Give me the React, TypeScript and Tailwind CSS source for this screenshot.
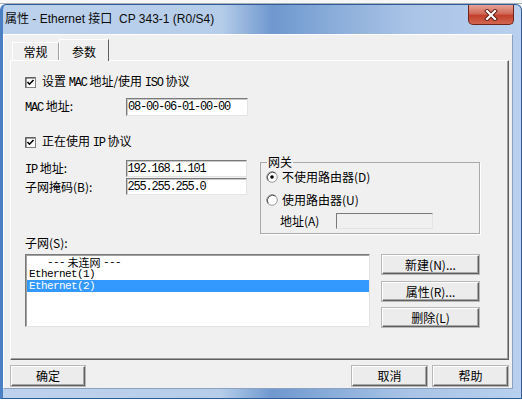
import React from "react";

const mono = "font-['Liberation_Mono',monospace] text-[12px] tracking-[-1.2px]";
const listMono = "font-['Liberation_Mono',monospace] text-[11px] tracking-[-0.6px] leading-[12px]";

function CheckBox() {
  return (
    <svg width="11" height="11" viewBox="0 0 11 11" className="shrink-0">
      <rect x="0.5" y="0.5" width="10" height="10" fill="#fff" stroke="#808080" />
      <path d="M1 1 H10" stroke="#404040" />
      <path d="M1 1 V10" stroke="#404040" />
      <path d="M2.5 5 L4.5 7.2 L8.5 3" stroke="#000" strokeWidth="1.6" fill="none" />
    </svg>
  );
}

function Radio({ checked }: { checked?: boolean }) {
  return (
    <svg width="12" height="12" viewBox="0 0 12 12" className="shrink-0">
      <circle cx="6" cy="6" r="5.3" fill="#fff" stroke="#9a9a9a" />
      <path d="M2.2 9.4 A5.3 5.3 0 0 1 9.6 2.1" stroke="#505050" fill="none" />
      {checked && <circle cx="6" cy="6" r="1.8" fill="#000" />}
    </svg>
  );
}

function Field({ value, className }: { value?: string; className: string }) {
  return (
    <div
      className={`${className} bg-white border border-t-[#7a7a7a] border-l-[#7a7a7a] border-r-[#e4e4e4] border-b-[#e4e4e4] shadow-[inset_1px_1px_0_#c8c8c8] flex items-center pl-[1px] leading-[14px] ${mono}`}
    >
      {value}
    </div>
  );
}

function Btn({ label, className }: { label: string; className: string }) {
  return (
    <div
      className={`${className} bg-[#ececec] border border-t-white border-l-white border-r-[#5f5f5f] border-b-[#5f5f5f] shadow-[inset_-1px_-1px_0_#a8a8a8,0_0_0_1px_#b8b8b8] flex items-center justify-center shrink-0`}
    >
      {label}
    </div>
  );
}

export default function App() {
  return (
    <div className="w-[522px] h-[402px] bg-white flex flex-col overflow-hidden font-['Noto_Sans_CJK_SC',sans-serif] text-[12px] leading-[14px] text-black">
      {/* strip of the desktop behind */}
      <div className="h-[4px] shrink-0 bg-[#f6f6f6] border-b border-[#a7afb9]" />

      {/* window frame */}
      <div className="flex-1 mb-[3px] flex flex-col rounded-t-[6px] border border-[#2f5c97] border-l-[3px] border-l-[#4a7fc3] bg-[linear-gradient(90deg,#bcd2ec_0%,#b6cdea_42%,#6f98cf_52%,#86aad8_62%,#a9c3e6_78%,#b9d0ee_100%)] pr-[8px] pb-[9px]">
        <div className="h-[29px] shrink-0 flex justify-between pl-[2px]">
          <div className="self-center font-['Liberation_Sans','Noto_Sans_CJK_SC',sans-serif] text-[12px] text-[#0b0b0b] pb-[1px]">
            属性 - Ethernet 接口&nbsp;&nbsp;CP 343-1 (R0/S4)
          </div>
          <div className="w-[46px] h-[20px] -mr-[1px] rounded-b-[5px] border border-[#6e241c] border-t-0 bg-[linear-gradient(180deg,#e6a295_0%,#d26a59_45%,#c2402c_55%,#d2664f_100%)] flex items-center justify-center">
            <svg width="14" height="12" viewBox="0 0 14 12">
              <path d="M3 2 L11 10 M11 2 L3 10" stroke="#5a1a12" strokeWidth="4" strokeLinecap="square" />
              <path d="M3 2 L11 10 M11 2 L3 10" stroke="#fff" strokeWidth="2.2" strokeLinecap="square" />
            </svg>
          </div>
        </div>

        {/* client area */}
        <div className="flex-1 flex flex-col bg-[#f0f0f0] border border-t-white border-l-white border-r-[#8ca2c0] border-b-[#8ca2c0] pb-[2px]">
          {/* tabs */}
          <div className="h-[25px] shrink-0 flex items-end pl-[8px]">
            <div className="w-[47px] h-[18px] border border-b-0 border-t-white border-l-white border-r-[#a0a0a0] flex items-center justify-center">
              常规
            </div>
            <div className="w-[50px] h-[22px] -mb-[1px] relative z-10 bg-[#f0f0f0] border border-b-0 border-t-white border-l-white border-r-[#5f5f5f] flex items-start justify-center pt-[5px]">
              参数
            </div>
          </div>

          {/* tab panel */}
          <div className="h-[300px] shrink-0 ml-[6px] mr-[3px] border border-t-white border-l-white border-r-[#5f5f5f] border-b-[#5f5f5f] shadow-[inset_-1px_-1px_0_#a0a0a0] flex flex-col pl-[14px]">
            <div className="mt-[14px] h-[14px] flex items-center gap-[6px]">
              <CheckBox />
              <span>
                设置 <span className={mono}>MAC</span> 地址/使用 <span className={mono}>ISO</span> 协议
              </span>
            </div>

            <div className="mt-[9px] flex items-center">
              <span className="w-[101px]">
                <span className={mono}>MAC</span> 地址:
              </span>
              <Field className="w-[122px] h-[18px]" value="08-00-06-01-00-00" />
            </div>

            <div className="mt-[19px] h-[14px] flex items-center gap-[6px]">
              <CheckBox />
              <span>
                正在使用 <span className={mono}>IP</span> 协议
              </span>
            </div>

            <div className="mt-[6px] flex items-start">
              <div className="w-[222px] mt-[5px] flex flex-col gap-[1px]">
                <div className="flex items-center">
                  <span className="w-[101px]">
                    <span className={mono}>IP</span> 地址:
                  </span>
                  <Field className="w-[122px] h-[17px]" value="192.168.1.101" />
                </div>
                <div className="flex items-center">
                  <span className="w-[101px]">子网掩码(B):</span>
                  <Field className="w-[122px] h-[17px]" value="255.255.255.0" />
                </div>
              </div>

              <fieldset className="ml-[13px] w-[220px] h-[79px] border border-[#a9a9a9] shadow-[1px_1px_0_#fff] flex flex-col px-[5px]">
                <legend className="ml-[1px] px-[1px] leading-[14px]">网关</legend>
                <div className="mt-[1px] h-[14px] flex items-center gap-[4px]">
                  <Radio checked />
                  <span>不使用路由器(D)</span>
                </div>
                <div className="mt-[9px] h-[14px] flex items-center gap-[4px]">
                  <Radio />
                  <span>使用路由器(U)</span>
                </div>
                <div className="mt-[6px] flex items-center pl-[14px]">
                  <span className="w-[56px]">地址(A)</span>
                  <div className="w-[97px] h-[16px] bg-[#f0f0f0] border border-t-[#7a7a7a] border-l-[#7a7a7a] border-r-[#e4e4e4] border-b-[#e4e4e4]" />
                </div>
              </fieldset>
            </div>

            <div className="mt-[2px] h-[14px] flex items-center">子网(S):</div>

            <div className="mt-[4px] flex items-start">
              <div className="w-[345px] h-[73px] bg-white border border-t-[#7a7a7a] border-l-[#7a7a7a] border-r-[#e4e4e4] border-b-[#e4e4e4] shadow-[inset_1px_1px_0_#a0a0a0] pt-[1px] pl-[1px] flex flex-col leading-[12px]">
                <div className="h-[12px] flex items-center pl-[20px] text-[11px] leading-[12px]">
                  <span className={listMono}>---</span>&nbsp;未连网&nbsp;
                  <span className={listMono}>---</span>
                </div>
                <div className={`h-[12px] flex items-center pl-[2px] ${listMono}`}>Ethernet(1)</div>
                <div className={`h-[12px] flex items-center pl-[2px] bg-[#3399ff] text-white ${listMono}`}>
                  Ethernet(2)
                </div>
              </div>
              <div className="ml-[12px] flex flex-col">
                <Btn className="w-[97px] h-[19px] mt-[1px]" label="新建(N)..." />
                <Btn className="w-[97px] h-[19px] mt-[8px]" label="属性(R)..." />
                <Btn className="w-[97px] h-[19px] mt-[7px]" label="删除(L)" />
              </div>
            </div>
          </div>

          {/* bottom buttons */}
          <div className="mt-[6px] flex items-center pl-[7px] pr-[4px]">
            <Btn className="w-[74px] h-[20px]" label="确定" />
            <div className="flex-1" />
            <Btn className="w-[75px] h-[20px]" label="取消" />
            <Btn className="w-[75px] h-[20px] ml-[6px]" label="帮助" />
          </div>
        </div>
      </div>
    </div>
  );
}
